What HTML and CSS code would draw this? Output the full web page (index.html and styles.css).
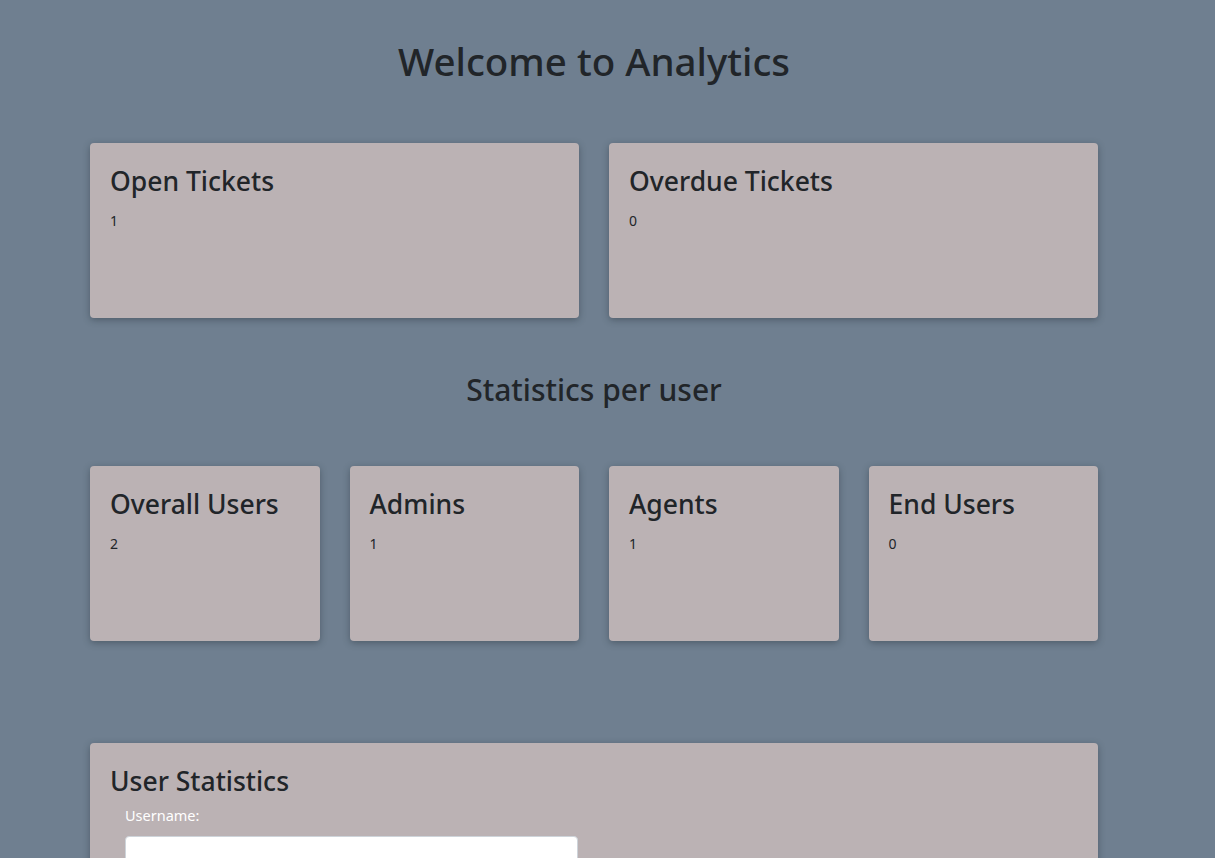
FILE: index.html
```html
<!DOCTYPE html>
<html lang="en">
<head>
<meta charset="utf-8">
<title>Analytics</title>
<link rel="stylesheet" href="styles.css">
</head>
<body>
<main class="page">
  <h1 class="page-title">Welcome to Analytics</h1>
  <section class="grid grid-2">
    <div class="card">
      <h3 class="card-title">Open Tickets</h3>
      <p class="card-value">1</p>
    </div>
    <div class="card">
      <h3 class="card-title">Overdue Tickets</h3>
      <p class="card-value">0</p>
    </div>
  </section>
  <h2 class="section-title">Statistics per user</h2>
  <section class="grid grid-4">
    <div class="card">
      <h3 class="card-title">Overall Users</h3>
      <p class="card-value">2</p>
    </div>
    <div class="card">
      <h3 class="card-title">Admins</h3>
      <p class="card-value">1</p>
    </div>
    <div class="card">
      <h3 class="card-title">Agents</h3>
      <p class="card-value">1</p>
    </div>
    <div class="card">
      <h3 class="card-title">End Users</h3>
      <p class="card-value">0</p>
    </div>
  </section>
  <section class="card card-wide">
    <h3 class="card-title">User Statistics</h3>
    <form class="user-form">
      <label class="form-label" for="username">Username:</label>
      <input class="form-input" id="username" type="text">
    </form>
  </section>
</main>
</body>
</html>
```
FILE: styles.css
```css
html, body {
  margin: 0;
  padding: 0;
  background: #6f7f90;
}
body {
  font-family: "Noto Sans", "Open Sans", sans-serif;
  color: #212529;
  height: 858px;
  overflow: hidden;
}
.page {
  padding: 0 117px 0 90px;
  display: flex;
  flex-direction: column;
}
.page-title {
  margin: 36px 0 0;
  text-align: center;
  font-size: 38.5px;
  font-weight: 500;
  line-height: 50px;
}
.section-title {
  margin: 52px 0 0;
  text-align: center;
  font-size: 30px;
  font-weight: 500;
  line-height: 40px;
}
.grid {
  display: grid;
  gap: 30px;
}
.grid-2 {
  grid-template-columns: 1fr 1fr;
  margin-top: 57px;
}
.grid-4 {
  grid-template-columns: repeat(4, 1fr);
  margin-top: 56px;
}
.card {
  background: #bbb2b4;
  border-radius: 4px;
  box-shadow: 0 2px 7px rgba(40, 50, 60, 0.45);
  padding: 19px 20px 20px;
  height: 175px;
  box-sizing: border-box;
}
.card-title {
  margin: 0;
  font-size: 26.5px;
  font-weight: 500;
  line-height: 38px;
}
.card-value {
  margin: 11px 0 0;
  font-size: 14px;
  line-height: 20px;
}
.card-wide {
  margin-top: 102px;
  height: auto;
  min-height: 200px;
}
.user-form {
  display: flex;
  flex-direction: column;
  padding: 0 15px;
}
.form-label {
  color: #fff;
  font-size: 14.5px;
  line-height: 22px;
  margin-top: 4px;
}
.form-input {
  margin-top: 10px;
  width: 453px;
  height: 38px;
  border: 1px solid #ced4da;
  border-radius: 4px;
  background: #fff;
  box-sizing: border-box;
}
```
